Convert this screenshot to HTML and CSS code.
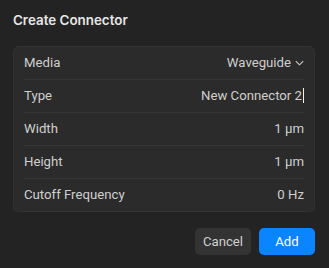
FILE: index.html
```html
<!DOCTYPE html>
<html>
<head>
<meta charset="utf-8">
<link rel="stylesheet" href="styles.css">
</head>
<body>
<div class="dialog">
  <div class="title">Create Connector</div>
  <div class="card">
    <div class="row">
      <span class="label">Media</span>
      <span class="value">Waveguide<svg class="chev" width="9" height="6" viewBox="0 0 9 6"><path d="M0.8 1.2 L4.5 4.8 L8.2 1.2" fill="none" stroke="#cfcfcf" stroke-width="1.1"/></svg></span>
    </div>
    <div class="row">
      <span class="label">Type</span>
      <span class="value">New Connector 2<span class="caret"></span></span>
    </div>
    <div class="row">
      <span class="label">Width</span>
      <span class="value">1 µm</span>
    </div>
    <div class="row">
      <span class="label">Height</span>
      <span class="value">1 µm</span>
    </div>
    <div class="row">
      <span class="label">Cutoff Frequency</span>
      <span class="value">0 Hz</span>
    </div>
  </div>
  <div class="actions">
    <button class="btn cancel">Cancel</button>
    <button class="btn add">Add</button>
  </div>
</div>
</body>
</html>
```
FILE: styles.css
```css
html, body {
  margin: 0;
  padding: 0;
  background: #232323;
}
body {
  width: 329px;
  height: 268px;
  overflow: hidden;
  font-family: Roboto, "Liberation Sans", sans-serif;
}
.dialog {
  padding: 11px 14px 0 13px;
  display: flex;
  flex-direction: column;
}
.title {
  font-family: Inter, "Noto Sans", sans-serif;
  font-weight: 600;
  font-size: 13.4px;
  line-height: 18px;
  color: #e6e6e6;
  height: 18px;
  margin-bottom: 17px;
}
.card {
  background: #2b2b2b;
  border: 1px solid #323232;
  border-radius: 6px;
  display: flex;
  flex-direction: column;
  padding: 0 10px;
}
.row {
  height: 32px;
  display: flex;
  align-items: center;
  justify-content: space-between;
  font-size: 13.2px;
  color: #cfcfcf;
  border-bottom: 1px solid #363636;
}
.row:last-child {
  border-bottom: none;
}
.label, .value {
  position: relative;
  top: -1px;
}
.value {
  display: flex;
  align-items: center;
}
.chev {
  margin-left: 4px;
  margin-top: 1px;
}
.caret {
  display: inline-block;
  width: 1px;
  height: 15px;
  background: #f0f0f0;
  margin-left: 1px;
}
.actions {
  display: flex;
  justify-content: flex-end;
  gap: 8px;
  margin-top: 16px;
}
.btn {
  height: 27px;
  width: 56px;
  border: none;
  border-radius: 5px;
  font-family: Roboto, "Liberation Sans", sans-serif;
  font-size: 13.2px;
  padding: 0;
}
.cancel {
  background: #333333;
  color: #cfcfcf;
}
.add {
  background: #0a84ff;
  color: #ffffff;
}
```
